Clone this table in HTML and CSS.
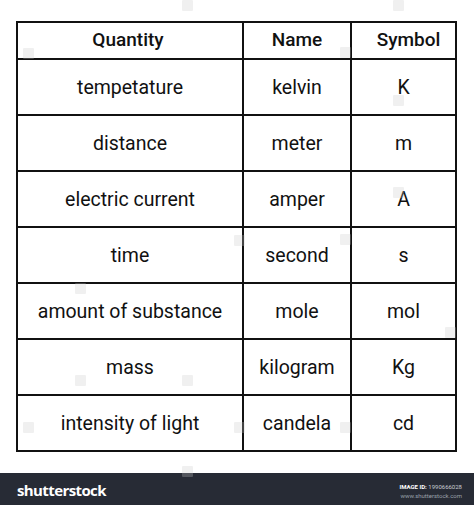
FILE: index.html
```html
<!DOCTYPE html>
<html>
<head>
<meta charset="utf-8">
<link rel="stylesheet" href="styles.css">
</head>
<body>
<div class="page">
  <div class="table">
    <div class="cell head head-quantity">Quantity</div>
    <div class="cell head">Name</div>
    <div class="cell head head-symbol">Symbol</div>

    <div class="cell">tempetature</div>
    <div class="cell">kelvin</div>
    <div class="cell">K</div>

    <div class="cell">distance</div>
    <div class="cell">meter</div>
    <div class="cell">m</div>

    <div class="cell">electric current</div>
    <div class="cell">amper</div>
    <div class="cell">A</div>

    <div class="cell">time</div>
    <div class="cell">second</div>
    <div class="cell">s</div>

    <div class="cell">amount of substance</div>
    <div class="cell">mole</div>
    <div class="cell">mol</div>

    <div class="cell">mass</div>
    <div class="cell">kilogram</div>
    <div class="cell">Kg</div>

    <div class="cell">intensity of light</div>
    <div class="cell">candela</div>
    <div class="cell">cd</div>
  </div>

  <div class="wm" style="left:182px;top:0px"></div>
  <div class="wm" style="left:393px;top:0px"></div>
  <div class="wm" style="left:23px;top:48px"></div>
  <div class="wm" style="left:340px;top:47px"></div>
  <div class="wm" style="left:393px;top:95px"></div>
  <div class="wm" style="left:393px;top:187px"></div>
  <div class="wm" style="left:234px;top:235px"></div>
  <div class="wm" style="left:340px;top:234px"></div>
  <div class="wm" style="left:75px;top:283px"></div>
  <div class="wm" style="left:445px;top:327px"></div>
  <div class="wm" style="left:75px;top:375px"></div>
  <div class="wm" style="left:182px;top:375px"></div>
  <div class="wm" style="left:23px;top:422px"></div>
  <div class="wm" style="left:234px;top:422px"></div>
  <div class="wm" style="left:340px;top:422px"></div>
  <div class="wm" style="left:182px;top:466px"></div>
</div>
<div class="footer">
  <div class="logo">shutterstock</div>
  <div class="meta">
    <div class="id"><b>IMAGE ID:</b> 1990666028</div>
    <div class="url">www.shutterstock.com</div>
  </div>
</div>
</body>
</html>
```
FILE: styles.css
```css
html, body {
  margin: 0;
  padding: 0;
  background: #ffffff;
}
body {
  width: 474px;
  height: 505px;
  overflow: hidden;
  font-family: Roboto, "Liberation Sans", sans-serif;
  color: #111111;
}
.page {
  position: relative;
  height: 473px;
  padding: 21px 0 0 16px;
  box-sizing: border-box;
}
.table {
  display: grid;
  grid-template-columns: 224px 106px 103px;
  grid-template-rows: 35px repeat(7, 54px);
  gap: 2px;
  padding: 2px;
  background: #111111;
  width: max-content;
}
.cell {
  background: #ffffff;
  display: flex;
  align-items: center;
  justify-content: center;
  font-size: 19.5px;
  font-weight: 400;
  line-height: 1;
  padding-top: 2px;
}
.head {
  font-weight: 500;
  font-size: 19px;
  padding-top: 0;
  padding-bottom: 2px;
}
.head-quantity {
  padding-right: 4px;
}
.head-symbol {
  padding-left: 10px;
}
.wm {
  position: absolute;
  width: 11px;
  height: 11px;
  background: rgba(200, 200, 200, 0.28);
  border-radius: 1px;
}
.footer {
  height: 32px;
  background: #272b35;
  display: flex;
  align-items: center;
  justify-content: space-between;
  padding: 0 12px 0 17px;
  color: #ffffff;
}
.logo {
  font-family: "Open Sans", Roboto, sans-serif;
  font-weight: 700;
  font-size: 15px;
  letter-spacing: -0.6px;
  padding-top: 2px;
}
.meta {
  text-align: right;
  font-size: 6px;
  line-height: 9px;
  color: #c9ccd3;
  padding-top: 4px;
}
.meta b {
  color: #ffffff;
}
.url {
  color: #9aa0aa;
}
```
